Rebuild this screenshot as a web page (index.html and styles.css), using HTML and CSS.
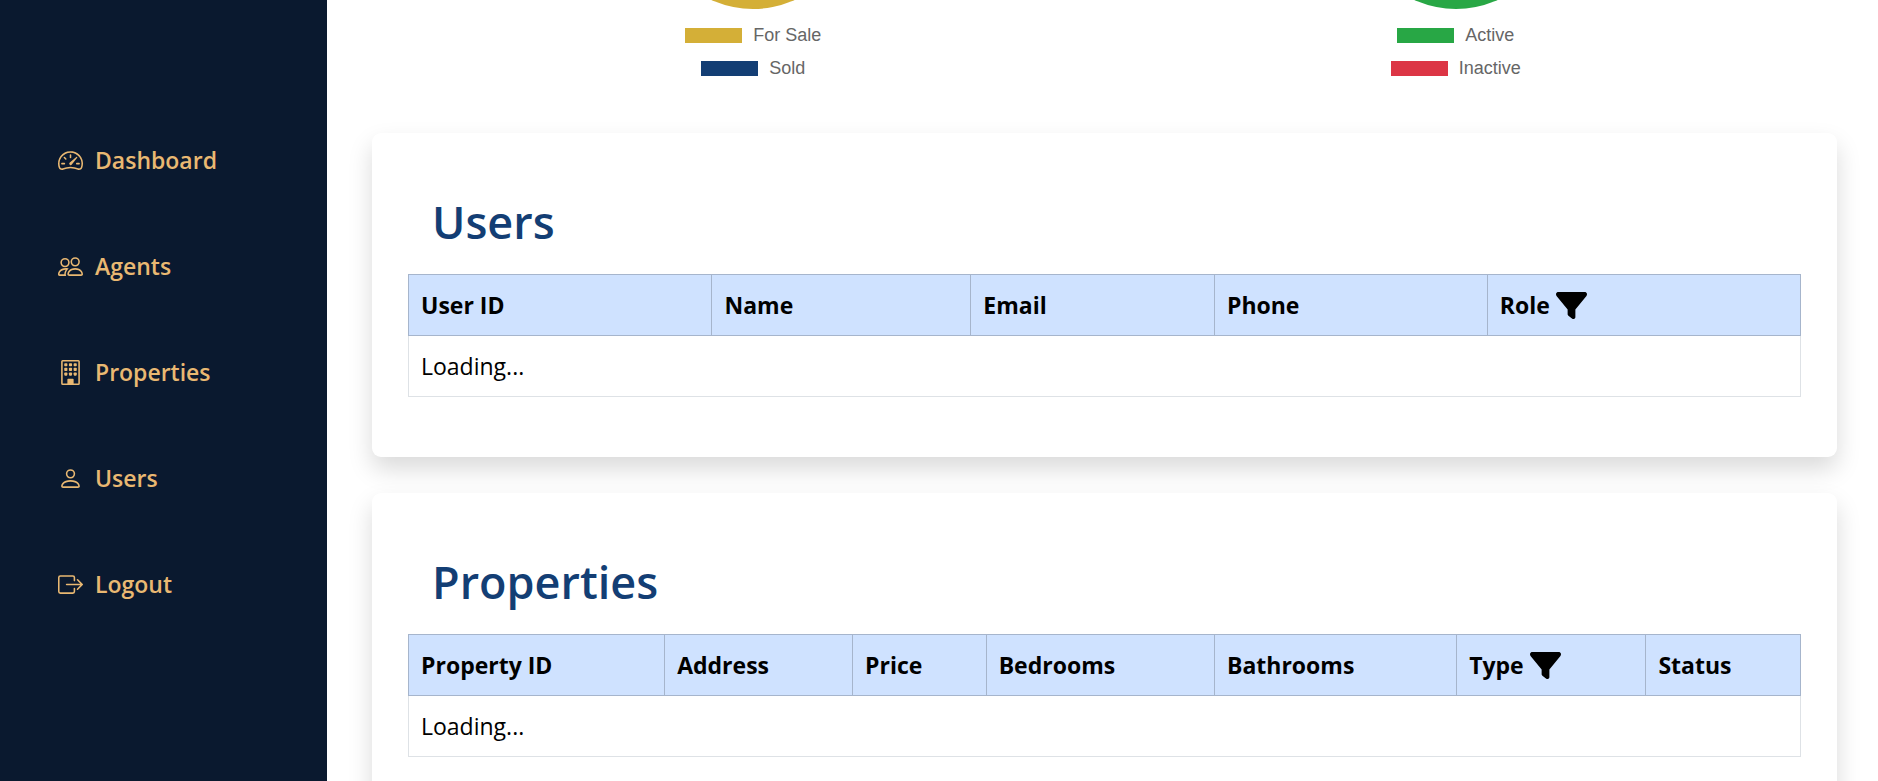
FILE: index.html
```html
<!DOCTYPE html>
<html lang="en">
<head>
<meta charset="utf-8">
<title>Admin Dashboard</title>
<link rel="stylesheet" href="styles.css">
</head>
<body>
<div class="layout">
  <nav class="sidebar" aria-label="Main">
    <a class="nav-link" href="#dashboard">
      <svg class="icon" viewBox="0 0 16 16" aria-hidden="true"><path d="M8 4a.5.5 0 0 1 .5.5V6a.5.5 0 0 1-1 0V4.5A.5.5 0 0 1 8 4zM3.732 5.732a.5.5 0 0 1 .707 0l.915.914a.5.5 0 1 1-.708.708l-.914-.915a.5.5 0 0 1 0-.707zM2 10a.5.5 0 0 1 .5-.5h1.586a.5.5 0 0 1 0 1H2.5A.5.5 0 0 1 2 10zm9.5 0a.5.5 0 0 1 .5-.5h1.5a.5.5 0 0 1 0 1H12a.5.5 0 0 1-.5-.5zm.754-4.246a.389.389 0 0 0-.527-.02L7.547 9.31a.91.91 0 1 0 1.302 1.258l3.434-4.297a.389.389 0 0 0-.029-.518z"/><path fill-rule="evenodd" d="M0 10a8 8 0 1 1 15.547 2.661c-.442 1.253-1.845 1.602-2.932 1.25C11.309 13.488 9.475 13 8 13c-1.474 0-3.31.488-4.615.911-1.087.352-2.49.003-2.932-1.25A7.988 7.988 0 0 1 0 10zm8-7a7 7 0 0 0-6.603 9.329c.203.575.923.876 1.68.63C4.397 12.533 6.358 12 8 12s3.604.532 4.923.96c.757.245 1.477-.056 1.68-.631A7 7 0 0 0 8 3z"/></svg>
      <span>Dashboard</span>
    </a>
    <a class="nav-link" href="#agents">
      <svg class="icon" viewBox="0 0 16 16" aria-hidden="true"><path d="M15 14s1 0 1-1-1-4-5-4-5 3-5 4 1 1 1 1h8Zm-7.978-1A.261.261 0 0 1 7 12.996c.001-.264.167-1.03.76-1.72C8.312 10.629 9.282 10 11 10c1.717 0 2.687.63 3.24 1.276.593.69.758 1.457.76 1.72l-.008.002a.274.274 0 0 1-.014.002H7.022ZM11 7a2 2 0 1 0 0-4 2 2 0 0 0 0 4Zm3-2a3 3 0 1 1-6 0 3 3 0 0 1 6 0ZM6.936 9.28a5.88 5.88 0 0 0-1.23-.247A7.35 7.35 0 0 0 5 9c-4 0-5 3-5 4 0 .667.333 1 1 1h4.216A2.238 2.238 0 0 1 5 13c0-1.01.377-2.042 1.09-2.904.243-.294.526-.569.846-.816ZM4.92 10A5.493 5.493 0 0 0 4 13H1c0-.26.164-1.03.76-1.724.545-.636 1.492-1.256 3.16-1.275ZM1.5 5.5a3 3 0 1 1 6 0 3 3 0 0 1-6 0Zm3-2a2 2 0 1 0 0 4 2 2 0 0 0 0-4Z"/></svg>
      <span>Agents</span>
    </a>
    <a class="nav-link" href="#properties">
      <svg class="icon" viewBox="0 0 16 16" aria-hidden="true"><path d="M2 1a1 1 0 0 1 1-1h10a1 1 0 0 1 1 1v14a1 1 0 0 1-1 1H3a1 1 0 0 1-1-1V1Zm11 0H3v14h3v-2.500a.5.5 0 0 1 .5-.5h3a.5.5 0 0 1 .5.5V15h3V1Z"/><rect x="4" y="2" width="2" height="2" rx=".5"/><rect x="7" y="2" width="2" height="2" rx=".5"/><rect x="10" y="2" width="2" height="2" rx=".5"/><rect x="4" y="5" width="2" height="2" rx=".5"/><rect x="7" y="5" width="2" height="2" rx=".5"/><rect x="10" y="5" width="2" height="2" rx=".5"/><rect x="4" y="8" width="2" height="2" rx=".5"/><rect x="7" y="8" width="2" height="2" rx=".5"/><rect x="10" y="8" width="2" height="2" rx=".5"/></svg>
      <span>Properties</span>
    </a>
    <a class="nav-link" href="#users">
      <svg class="icon" viewBox="0 0 16 16" aria-hidden="true"><path d="M8 8a3 3 0 1 0 0-6 3 3 0 0 0 0 6Zm2-3a2 2 0 1 1-4 0 2 2 0 0 1 4 0Zm4 8c0 1-1 1-1 1H3s-1 0-1-1 1-4 6-4 6 3 6 4Zm-1-.004c-.001-.246-.154-.986-.832-1.664C11.516 10.68 10.289 10 8 10c-2.29 0-3.516.68-4.168 1.332-.678.678-.83 1.418-.832 1.664h10Z"/></svg>
      <span>Users</span>
    </a>
    <a class="nav-link" href="#logout">
      <svg class="icon" viewBox="0 0 16 16" aria-hidden="true"><path d="M10 12.500a.5.5 0 0 1-.5.5h-8a.5.5 0 0 1-.5-.5v-9a.5.5 0 0 1 .5-.5h8a.5.5 0 0 1 .5.5v2a.5.5 0 0 0 1 0v-2A1.500 1.500 0 0 0 9.500 2h-8A1.500 1.500 0 0 0 0 3.500v9A1.500 1.500 0 0 0 1.500 14h8a1.500 1.500 0 0 0 1.500-1.500v-2a.5.5 0 0 0-1 0v2z"/><path d="M15.854 8.354a.5.5 0 0 0 0-.708l-3-3a.5.5 0 0 0-.708.708L14.293 7.500H5.500a.5.5 0 0 0 0 1h8.793l-2.147 2.146a.5.5 0 0 0 .708.708l3-3z"/></svg>
      <span>Logout</span>
    </a>
  </nav>

  <main class="content">
    <section class="charts">
      <div class="chart">
        <svg class="pie" viewBox="0 193 202 9" aria-hidden="true"><circle class="fill-gold" cx="101" cy="101" r="101"/></svg>
        <ul class="legend">
          <li class="legend-item"><span class="swatch gold"></span>For Sale</li>
          <li class="legend-item"><span class="swatch navy"></span>Sold</li>
        </ul>
      </div>
      <div class="chart">
        <svg class="pie" viewBox="0 193 202 9" aria-hidden="true"><circle class="fill-green" cx="101" cy="101" r="101"/></svg>
        <ul class="legend">
          <li class="legend-item"><span class="swatch green"></span>Active</li>
          <li class="legend-item"><span class="swatch red"></span>Inactive</li>
        </ul>
      </div>
    </section>

    <section class="card" id="users">
      <h2 class="card-title">Users</h2>
      <table class="table users-table">
        <thead>
          <tr>
            <th scope="col">User ID</th>
            <th scope="col">Name</th>
            <th scope="col">Email</th>
            <th scope="col">Phone</th>
            <th scope="col"><span class="filter-head">Role<button class="filter" type="button" aria-label="Filter by role"><svg class="funnel" viewBox="0 0 512 512" aria-hidden="true"><path d="M3.900 54.900C10.500 40.900 24.500 32 40 32H472c15.500 0 29.500 8.900 36.100 22.900s4.600 30.500-5.200 42.500L320 320.900V448c0 12.100-6.800 23.200-17.700 28.600s-23.800 4.300-33.500-3l-64-48c-8.100-6-12.800-15.500-12.800-25.600V320.900L9 97.300C-.7 85.400-2.800 68.800 3.900 54.900z"/></svg></button></span></th>
          </tr>
        </thead>
        <tbody>
          <tr><td colspan="5">Loading...</td></tr>
        </tbody>
      </table>
    </section>

    <section class="card" id="properties">
      <h2 class="card-title">Properties</h2>
      <table class="table properties-table">
        <thead>
          <tr>
            <th scope="col">Property ID</th>
            <th scope="col">Address</th>
            <th scope="col">Price</th>
            <th scope="col">Bedrooms</th>
            <th scope="col">Bathrooms</th>
            <th scope="col"><span class="filter-head">Type<button class="filter" type="button" aria-label="Filter by type"><svg class="funnel" viewBox="0 0 512 512" aria-hidden="true"><path d="M3.900 54.900C10.500 40.900 24.500 32 40 32H472c15.500 0 29.500 8.900 36.100 22.900s4.600 30.500-5.200 42.500L320 320.900V448c0 12.100-6.800 23.200-17.700 28.600s-23.800 4.300-33.500-3l-64-48c-8.100-6-12.800-15.500-12.800-25.600V320.900L9 97.300C-.7 85.400-2.800 68.800 3.900 54.900z"/></svg></button></span></th>
            <th scope="col">Status</th>
          </tr>
        </thead>
        <tbody>
          <tr><td colspan="7">Loading...</td></tr>
        </tbody>
      </table>
    </section>
  </main>
</div>
</body>
</html>
```
FILE: styles.css
```css
* {
  box-sizing: border-box;
}

body {
  margin: 0;
  font-family: "Segoe UI", "Open Sans", "Noto Sans", sans-serif;
  font-size: 23px;
  line-height: 36px;
  color: #000;
  background: #fff;
}

.layout {
  display: flex;
  height: 100vh;
  overflow: hidden;
}

/* Sidebar */
.sidebar {
  flex: 0 0 327px;
  display: flex;
  flex-direction: column;
  gap: 70px;
  padding: 142px 36px 36px 58px;
  background: #0a192f;
}

.nav-link {
  display: flex;
  align-items: center;
  gap: 12px;
  color: #e9b872;
  font-weight: 600;
  text-decoration: none;
}

.icon {
  flex: none;
  width: 25px;
  height: 25px;
  fill: currentColor;
}

/* Main column */
.content {
  flex: 1;
  min-width: 0;
  display: flex;
  flex-direction: column;
  gap: 36px;
  padding: 0 41px 36px 45px;
  overflow: hidden;
}

.charts {
  display: grid;
  grid-template-columns: 1fr 1fr;
  padding: 0 30px 12px;
}

.chart {
  display: flex;
  flex-direction: column;
  align-items: center;
  gap: 10px;
}

.pie {
  display: block;
  width: 202px;
  height: 9px;
}

.fill-gold {
  fill: #d4af37;
}

.fill-green {
  fill: #28a745;
}

.legend {
  margin: 0;
  padding: 0;
  list-style: none;
  font-family: "Liberation Sans", Arial, sans-serif;
  font-size: 18px;
  line-height: 33px;
  color: #666;
}

.legend-item {
  display: flex;
  justify-content: center;
  align-items: center;
  gap: 11px;
}

.swatch {
  width: 57px;
  height: 15px;
}

.gold {
  background: #d4af37;
}

.navy {
  background: #133e74;
}

.green {
  background: #28a745;
}

.red {
  background: #dc3545;
}

/* Cards */
.card {
  flex: none;
  padding: 36px;
  border-radius: 9px;
  background: #fff;
  box-shadow: 0 12px 24px rgba(0, 0, 0, 0.15);
}

.card-title {
  margin: 0;
  padding: 24px;
  font-size: 45px;
  font-weight: 600;
  line-height: 57px;
  color: #133e74;
}

.table {
  width: 100%;
  margin-bottom: 24px;
  border-collapse: collapse;
  table-layout: fixed;
}

.table th,
.table td {
  padding: 12px;
  text-align: left;
}

.table th {
  border: 1px solid #a6b5cc;
  background: #cfe2ff;
  font-weight: 700;
}

.table td {
  border: 1px solid #dee2e6;
}

.users-table th:nth-child(1) { width: 21.8%; }
.users-table th:nth-child(2) { width: 18.6%; }
.users-table th:nth-child(3) { width: 17.5%; }
.users-table th:nth-child(4) { width: 19.6%; }

.properties-table th:nth-child(1) { width: 18.4%; }
.properties-table th:nth-child(2) { width: 13.5%; }
.properties-table th:nth-child(3) { width: 9.6%; }
.properties-table th:nth-child(4) { width: 16.4%; }
.properties-table th:nth-child(5) { width: 17.4%; }
.properties-table th:nth-child(6) { width: 13.6%; }

.filter-head {
  display: flex;
  align-items: center;
  gap: 6px;
}

.filter {
  display: flex;
  padding: 0;
  border: 0;
  background: none;
  color: inherit;
  cursor: pointer;
}

.funnel {
  width: 31px;
  height: 31px;
  fill: currentColor;
}
```
